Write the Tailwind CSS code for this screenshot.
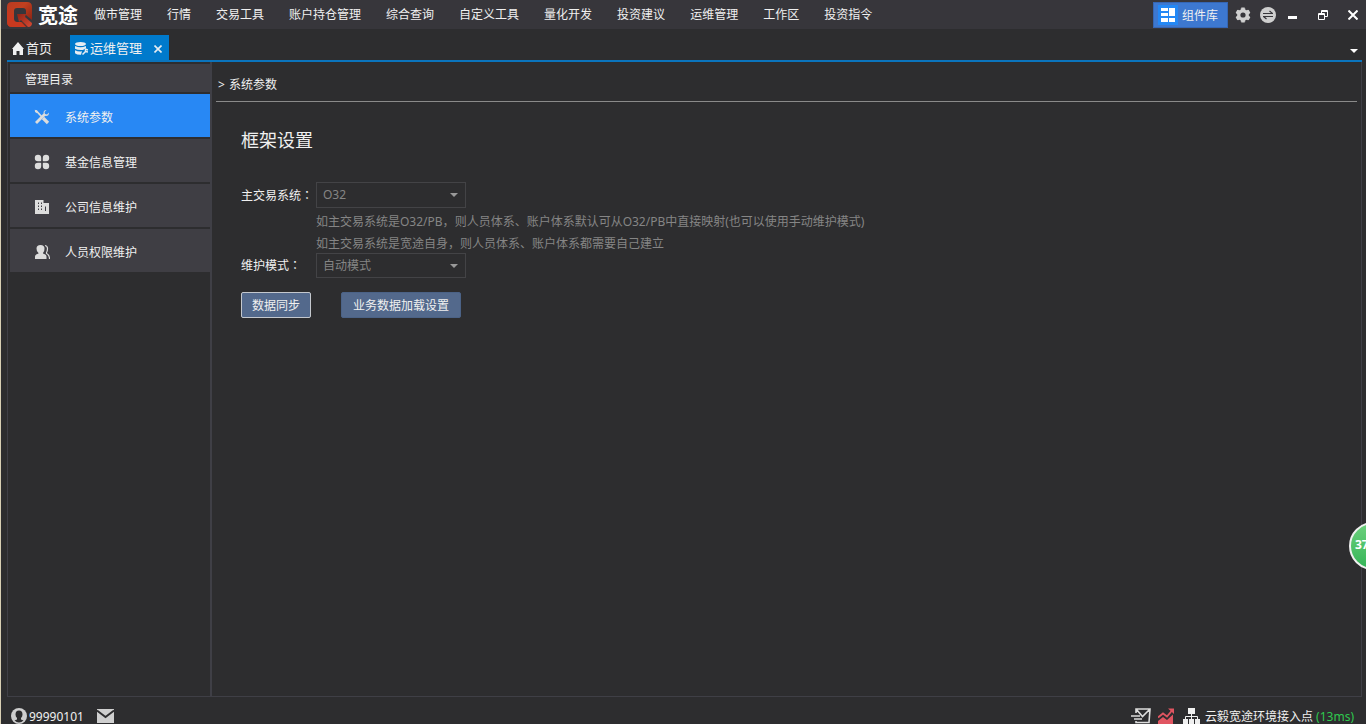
<!DOCTYPE html>
<html lang="zh-CN">
<head>
<meta charset="utf-8">
<meta name="viewport" content="width=device-width, initial-scale=1">
<title>宽途 - 运维管理</title>
<script src="https://cdn.jsdelivr.net/npm/@tailwindcss/browser@4"></script>
</head>
<body class="relative flex h-screen flex-col overflow-hidden border-l border-[#d8cfb4] bg-[#2d2d2f] font-['Noto_Sans','Noto_Sans_CJK_SC',sans-serif] text-xs text-[#f0f0f0]">

<header class="flex h-[29px] shrink-0 items-center bg-[#37363b] pr-2 pl-1.5">
  <svg class="h-[26px] w-[26px] shrink-0" viewBox="0 0 26 26" aria-hidden="true">
    <defs>
      <linearGradient id="lg" x1="0" y1="0" x2="1" y2="1"><stop offset="0" stop-color="#b83a22"/><stop offset=".4" stop-color="#c2401f"/><stop offset="1" stop-color="#7d1c10"/></linearGradient>
      <linearGradient id="lr" x1="0" y1="0" x2="1" y2="1"><stop offset="0" stop-color="#8e2415"/><stop offset="1" stop-color="#d84a34"/></linearGradient>
    </defs>
    <path d="M5 0H20Q25 0 25 5V18L19 13V9Q19 6 16 6H10Q7 6 7 9V17Q7 20 10 20H15L20 25H5Q0 25 0 20V5Q0 0 5 0Z" fill="url(#lg)"/>
    <path d="M0 8V20Q0 25 5 25H19L14 20H10Q7 20 7 17V13Z" fill="#c8391f"/>
    <path d="M10 12H19L18 15L25 21Q25 25 21 25L14 18L12 20Z" fill="url(#lr)"/>
  </svg>
  <span class="ml-[5px] shrink-0 pt-0.5 text-xl leading-none font-bold text-white">宽途</span>
  <nav class="ml-4 flex gap-[25px] whitespace-nowrap" aria-label="主菜单">
    <a href="#">做市管理</a><a href="#">行情</a><a href="#">交易工具</a><a href="#">账户持仓管理</a><a href="#">综合查询</a><a href="#">自定义工具</a><a href="#">量化开发</a><a href="#">投资建议</a><a href="#">运维管理</a><a href="#">工作区</a><a href="#">投资指令</a>
  </nav>
  <button class="ml-auto flex h-[26px] w-[75px] shrink-0 items-center border border-[#3566b4] bg-[#3d78d0] pl-1">
    <svg class="h-5 w-5 bg-[#2488f5]" viewBox="0 0 20 20" fill="#fff" aria-hidden="true"><path d="M3 3h7v3H3zM3 8h7v3H3zM3 13h7v4H3zM11 3h6v8h-6zM11 13h6v4h-6z"/></svg>
    <span class="ml-1 pt-0.5">组件库</span>
  </button>
  <button class="ml-[7px]" aria-label="设置">
    <svg class="h-4 w-4" viewBox="0 0 16 16" aria-hidden="true"><path d="M8 1.500v13M2.400 4.750l11.200 6.500M13.600 4.750L2.400 11.250" stroke="#cfcfcf" stroke-width="4.600" stroke-linecap="butt"/><path d="M8 .5v15M1.500 4.250l13 7.500M14.500 4.250l-13 7.500" stroke="#cfcfcf" stroke-width="3.400"/><circle cx="8" cy="8" r="5.800" fill="#cfcfcf"/><circle cx="8" cy="8" r="2.600" fill="#37363b"/></svg>
  </button>
  <button class="ml-[9px]" aria-label="切换">
    <svg class="h-4 w-4" viewBox="0 0 16 16" aria-hidden="true"><circle cx="8" cy="8" r="8" fill="#cfcfcf"/><path d="M3 6.500h10M9.500 4l3 2.500M13 9.500H3M6.500 12l-3-2.500" fill="none" stroke="#37363b" stroke-width="1.200"/></svg>
  </button>
  <button class="ml-3" aria-label="最小化">
    <svg class="h-4 w-[9px]" viewBox="0 0 9 16" fill="#fff" aria-hidden="true"><path d="M0 9h9v3H0z"/></svg>
  </button>
  <button class="ml-[21px]" aria-label="还原">
    <svg class="h-2.5 w-2.5" viewBox="0 0 10 10" fill="none" stroke="#fff" aria-hidden="true"><path d="M.5 3.500h6v6h-6zM3.500 3V.5h6v6H7M.5 4.500h6M3.500 1.500h6"/></svg>
  </button>
  <button class="ml-5" aria-label="关闭">
    <svg class="h-2.5 w-2.5" viewBox="0 0 10 10" stroke="#fff" stroke-width="2" aria-hidden="true"><path d="M.5.5l9 9M9.500.5l-9 9"/></svg>
  </button>
</header>

<div class="mr-1 ml-1.5 flex h-[33px] shrink-0 items-end border-b-2 border-[#0a74bd] text-[13px]">
  <a href="#" class="flex h-[25px] w-[63px] items-center pt-0.5 pl-[5px]">
    <svg class="h-[13px] w-3" viewBox="0 0 12 13" fill="#f0f0f0" aria-hidden="true"><path d="M6 0l6 7h-1v6H7.500V9h-3v4H1V7H0z"/></svg>
    <span class="ml-0.5">首页</span>
  </a>
  <div class="flex h-[25px] w-[99px] items-center bg-[#007acc] pt-0.5 pl-[5px]">
    <svg class="h-[13px] w-[13px]" viewBox="0 0 13 13" aria-hidden="true"><ellipse cx="5.500" cy="2" rx="5.500" ry="2" fill="#e6edf2"/><path d="M0 4Q5.500 6.500 11 4v2L8 8Q3 8.500 0 6.800zM0 8.200Q3 9.700 7 9.300L6 12.800Q2 13 0 11.200z" fill="#e6edf2"/><path d="M7.500 12.500l3-3V7l2.500 1M10.500 9.500l2.500.5" fill="none" stroke="#e6edf2" stroke-width="1.500"/></svg>
    <a href="#" aria-current="page" class="ml-0.5">运维管理</a>
    <button class="ml-3" aria-label="关闭标签">
      <svg class="h-2 w-2" viewBox="0 0 8 8" stroke="#e6edf2" stroke-width="1.600" aria-hidden="true"><path d="M.5.500l7 7M7.500.500l-7 7"/></svg>
    </button>
  </div>
  <button class="mr-1 mb-[7px] ml-auto" aria-label="标签列表">
    <svg class="h-1 w-2" viewBox="0 0 8 4" fill="#fff" aria-hidden="true"><path d="M0 0h8L4 4z"/></svg>
  </button>
</div>

<div class="mr-1 ml-1.5 flex min-h-0 flex-1 border border-t-0 border-[#3f3f46]">
  <aside class="w-[204px] shrink-0 border-r-2 border-[#3f3f46] pt-0.5 pl-0.5">
    <div class="flex w-[200px] flex-col gap-0.5">
      <h2 class="flex h-7 items-center bg-[#3f3e44] pt-1 pl-[15px]">管理目录</h2>
      <nav class="flex flex-col gap-0.5" aria-label="管理目录">
        <a href="#" aria-current="page" class="flex h-[43px] items-center bg-[#2888f4] pt-0.5 pl-6">
          <svg class="h-4 w-4" viewBox="0 0 16 16" fill="none" stroke="#dcdcdc" aria-hidden="true"><path d="M2 1.500l5.500 6" stroke-width="1.800"/><path d="M9 9l5 5" stroke-width="3.200"/><path d="M2 14l8.500-8.500" stroke-width="2.800"/><path d="M12.500 1Q9.500 1 9.500 4t2.500 3q3 0 3-3.500l-2 2-2-.5-.5-2z" fill="#dcdcdc" stroke="none"/><path d="M.8.800l2.200.7 1 2-1 .800-2-1.300z" fill="#dcdcdc"  stroke="none"/></svg>
          <span class="ml-[15px] pt-0.5">系统参数</span>
        </a>
        <a href="#" class="flex h-[43px] items-center bg-[#3f3e44] pt-0.5 pl-6">
          <svg class="h-4 w-4" viewBox="0 0 16 16" fill="#dcdcdc" aria-hidden="true"><path d="M4 .8Q7.200.8 7.200 4v2.500q0 .7-.7.700H4Q.8 7.200.8 4T4 .8zM12 .8Q8.800.8 8.800 4v2.500q0 .7.700.7H12q3.200 0 3.200-3.200T12 .8zM4 15.200q3.200 0 3.200-3.200V9.500q0-.7-.7-.7H4Q.8 8.800.8 12T4 15.200zM12 15.200q-3.200 0-3.200-3.200V9.500q0-.7.700-.7H12q3.200 0 3.200 3.200T12 15.200z"/></svg>
          <span class="ml-[15px] pt-0.5">基金信息管理</span>
        </a>
        <a href="#" class="flex h-[43px] items-center bg-[#3f3e44] pt-0.5 pl-6">
          <svg class="h-4 w-4" viewBox="0 0 16 16" aria-hidden="true"><path d="M1 1h8.500v3H15v11H1z" fill="#dcdcdc"/><path d="M4 3.500h1V5H4zM4 6.500h1V8H4zM4 9.500h1V11H4zM7 3.500h1V5H7zM7 6.500h1V8H7zM7 9.500h1V11H7zM11 7.500h1V12h-1z" fill="#3f3e44"/></svg>
          <span class="ml-[15px] pt-0.5">公司信息维护</span>
        </a>
        <a href="#" class="flex h-[43px] items-center bg-[#3f3e44] pt-0.5 pl-6">
          <svg class="h-4 w-4" viewBox="0 0 16 16" aria-hidden="true"><path d="M6.500 1Q10.500 1 10.500 4.500T9 9v.5q3.500 1 3.500 3V15H1v-2.500q0-2 3.500-3V9Q2.500 8 2.500 4.500 2.500 1 6.500 1z" fill="#dcdcdc"/><path d="M11 1.500q2.500.5 2.500 3T12.500 8.500v1Q15.500 11 15.500 15" fill="none" stroke="#dcdcdc" stroke-width="1.200"/></svg>
          <span class="ml-[15px] pt-0.5">人员权限维护</span>
        </a>
      </nav>
    </div>
  </aside>

  <main class="min-w-0 flex-1 pr-1 pl-1">
    <div class="flex h-10 items-center border-b border-[#8a8a8a] pt-1.5 pl-0.5">&gt;<span class="ml-1">系统参数</span></div>
    <form class="px-[25px] pt-6">
      <h1 class="text-lg leading-7">框架设置</h1>
      <div class="mt-7 flex h-[26px] items-center">
        <label for="system" class="w-[75px]">主交易系统<span lang="zh-TW" class="font-['Noto_Sans_CJK_TC']">：</span></label>
        <div class="grid h-full w-[150px] items-center">
          <select id="system" disabled class="col-start-1 row-start-1 h-full w-full appearance-none border border-[#434346] bg-transparent px-1.5 text-[#858585]"><option>O32</option></select>
          <svg class="col-start-1 row-start-1 mr-2 h-1 w-2 justify-self-end" viewBox="0 0 8 4" fill="#999" aria-hidden="true"><path d="M0 0h8L4 4z"/></svg>
        </div>
      </div>
      <div class="ml-[75px] flex flex-col gap-1 pt-[5px] leading-[18px] text-[#858585]">
        <p>如主交易系统是O32/PB，则人员体系、账户体系默认可从O32/PB中直接映射(也可以使用手动维护模式)</p>
        <p>如主交易系统是宽途自身，则人员体系、账户体系都需要自己建立</p>
      </div>
      <div class="flex h-[25px] items-center">
        <label for="mode" class="w-[75px]">维护模式<span lang="zh-TW" class="font-['Noto_Sans_CJK_TC']">：</span></label>
        <div class="grid h-full w-[150px] items-center">
          <select id="mode" disabled class="col-start-1 row-start-1 h-full w-full appearance-none border border-[#434346] bg-transparent px-1.5 text-[#858585]"><option>自动模式</option></select>
          <svg class="col-start-1 row-start-1 mr-2 h-1 w-2 justify-self-end" viewBox="0 0 8 4" fill="#999" aria-hidden="true"><path d="M0 0h8L4 4z"/></svg>
        </div>
      </div>
      <div class="mt-3.5 flex gap-[30px]">
        <button type="button" class="h-[26px] w-[70px] rounded-xs border border-[#c4c8ce] bg-[#53698c] pt-0.5">数据同步</button>
        <button type="button" class="h-[26px] w-[120px] rounded-xs border border-[#4b6286] bg-[#53698c] pt-0.5">业务数据加载设置</button>
      </div>
    </form>
  </main>
</div>

<footer class="flex shrink-0 items-center pt-[11px] pr-3 pl-2.5">
  <svg class="h-4 w-4" viewBox="0 0 16 16" aria-hidden="true"><circle cx="8" cy="8" r="8" fill="#cfcfcf"/><path d="M8 2.500q3.500 0 3.500 4 0 2-1.500 3.500v1.500l2.500 1Q10.500 14.500 8 14.500T3.500 12.500l2.500-1V10Q4.500 8.500 4.500 6.500q0-4 3.500-4z" fill="#2d2d2f"/></svg>
  <span class="ml-0.5 pt-0.5 leading-[14px]">99990101</span>
  <svg class="ml-[13px] h-4 w-[17px]" viewBox="0 0 17 16" aria-hidden="true"><path d="M0 1h17v14H0z" fill="#cfcfcf"/><path d="M0 2.500l8.500 6.500L17 2.500" fill="none" stroke="#2d2d2f" stroke-width="1.800"/></svg>
  <svg class="ml-auto h-4 w-5" viewBox="0 0 20 16" fill="none" stroke="#dcdcdc" stroke-width="1.600" aria-hidden="true"><path d="M5 5V1h14l-1 13.500H5V13M5.500 1.500l6 7L19 1M0 8h9M3 11h8"/></svg>
  <svg class="ml-[7px] h-4 w-4" viewBox="0 0 16 16" fill="#e05561" aria-hidden="true"><path d="M0 13l5-4 4 3 6-5.500V16H0z"/><path d="M0 9.500l5-4 4 3L14 2.500" fill="none" stroke="#e05561" stroke-width="1.800"/><path d="M10 .5h6V6z"/></svg>
  <svg class="ml-[9px] h-4 w-[17px]" viewBox="0 0 17 16" fill="#f0f0f0" aria-hidden="true"><path d="M5 0h7v6H5zM0 11h5v5H0zM6 11h5v5H6zM12 11h5v5h-5z"/><path d="M8.500 6v5M2.500 11V8.500h12V11" fill="none" stroke="#f0f0f0"/></svg>
  <span class="ml-[5px] pt-0.5 leading-[14px]">云毅宽途环境接入点 <span class="text-[#2fc94e]">(13ms)</span></span>
</footer>

<div class="absolute top-[522px] -right-[31px] flex h-12 w-12 items-center rounded-full border-2 border-[#f0f0f0] bg-linear-to-b from-[#6ad07c] to-[#33b558] pb-0.5 pl-1 font-bold text-white">37</div>

</body>
</html>
